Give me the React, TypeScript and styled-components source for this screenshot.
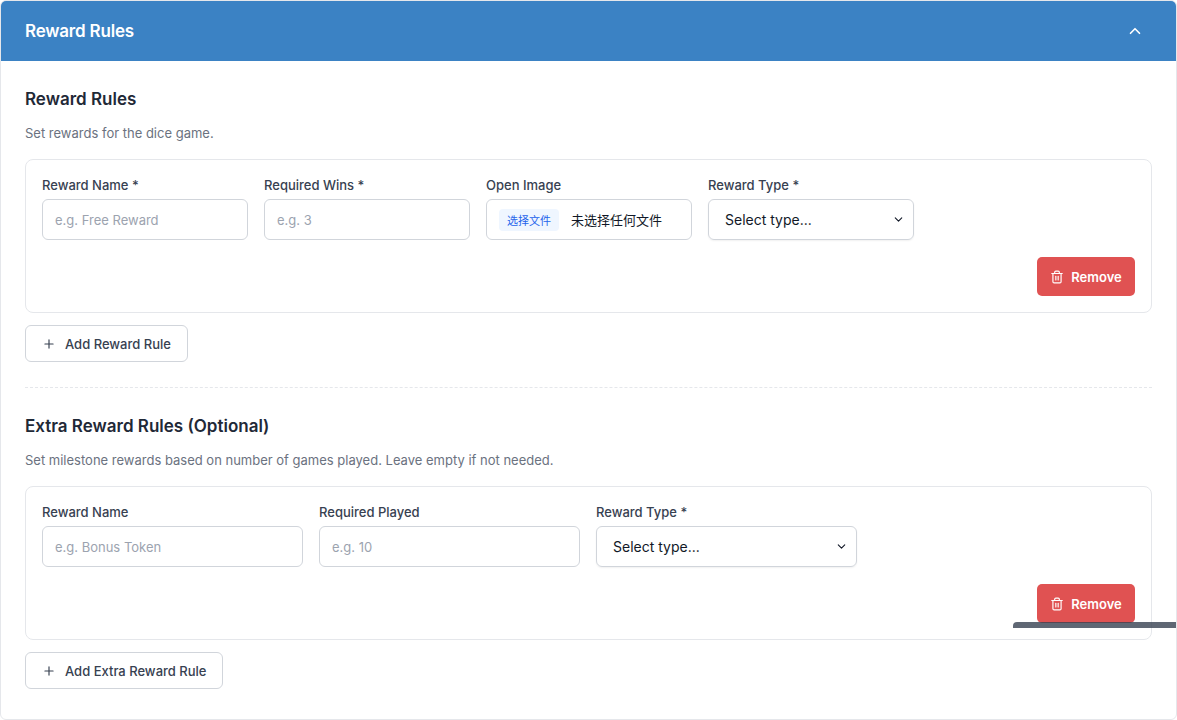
import styled, { createGlobalStyle } from "styled-components"
import { ChevronUp, ChevronDown, Plus, Trash2 } from "lucide-react"

const Global = createGlobalStyle`
    body {
        margin: 0;
        background: #fff;
        font-family: Inter, "Noto Sans", "Noto Sans CJK SC", sans-serif;
        color: #1f2937;
    }
`

type Field = { label: string; placeholder?: string; kind: "text" | "file" | "select" }

const rewardFields: Field[] = [
    { label: "Reward Name *", placeholder: "e.g. Free Reward", kind: "text" },
    { label: "Required Wins *", placeholder: "e.g. 3", kind: "text" },
    { label: "Open Image", kind: "file" },
    { label: "Reward Type *", kind: "select" },
]

const extraFields: Field[] = [
    { label: "Reward Name", placeholder: "e.g. Bonus Token", kind: "text" },
    { label: "Required Played", placeholder: "e.g. 10", kind: "text" },
    { label: "Reward Type *", kind: "select" },
]

function RuleCard({ fields, width }: { fields: Field[]; width: number }) {
    return (
        <Card>
            <FieldRow>
                {fields.map((f) => (
                    <FieldBox key={f.label} $width={width}>
                        <Label>{f.label}</Label>
                        {f.kind === "text" && <Input placeholder={f.placeholder} />}
                        {f.kind === "file" && (
                            <FileBox>
                                <FileButton>选择文件</FileButton>
                                <span>未选择任何文件</span>
                            </FileBox>
                        )}
                        {f.kind === "select" && (
                            <SelectBox>
                                <span>Select type...</span>
                                <ChevronDown size={13} strokeWidth={2} />
                            </SelectBox>
                        )}
                    </FieldBox>
                ))}
            </FieldRow>
            <ActionRow>
                <RemoveButton>
                    <Trash2 size={14} strokeWidth={2} />
                    Remove
                </RemoveButton>
            </ActionRow>
        </Card>
    )
}

export default function App() {
    return (
        <>
            <Global />
            <Panel>
                <Header>
                    <HeaderTitle>Reward Rules</HeaderTitle>
                    <ChevronUp size={18} strokeWidth={2.2} color="#fff" />
                </Header>
                <Body>
                    <Title>Reward Rules</Title>
                    <Desc>Set rewards for the dice game.</Desc>
                    <RuleCard fields={rewardFields} width={206} />
                    <AddButton>
                        <Plus size={14} strokeWidth={2} />
                        Add Reward Rule
                    </AddButton>
                    <Divider />
                    <Title>Extra Reward Rules (Optional)</Title>
                    <Desc>
                        Set milestone rewards based on number of games played. Leave
                        empty if not needed.
                    </Desc>
                    <RuleCard fields={extraFields} width={261} />
                    <AddButton>
                        <Plus size={14} strokeWidth={2} />
                        Add Extra Reward Rule
                    </AddButton>
                </Body>
                <Scrollbar />
            </Panel>
        </>
    )
}

const Panel = styled.div`
    position: relative;
    width: 1177px;
    height: 720px;
    box-sizing: border-box;
    border: 1px solid #e5e7eb;
    border-radius: 6px;
    overflow: hidden;
`

const Header = styled.div`
    height: 60px;
    background: #3b82c4;
    display: flex;
    align-items: center;
    justify-content: space-between;
    padding: 0 32px 0 24px;
`

const HeaderTitle = styled.div`
    color: #fff;
    font-size: 17px;
    font-weight: 600;
    letter-spacing: -0.2px;
`

const Body = styled.div`
    padding: 28px 24px 0 24px;
    display: flex;
    flex-direction: column;
`

const Title = styled.div`
    font-size: 17px;
    font-weight: 600;
    color: #1f2937;
    margin-bottom: 16px;
`

const Desc = styled.div`
    font-size: 13px;
    color: #6b7280;
    margin-bottom: 18px;
`

const Card = styled.div`
    border: 1px solid #e5e7eb;
    border-radius: 8px;
    padding: 17px 16px 16px 16px;
    display: flex;
    flex-direction: column;
`

const FieldRow = styled.div`
    display: flex;
    gap: 16px;
`

const FieldBox = styled.div<{ $width: number }>`
    width: ${(p) => p.$width}px;
    display: flex;
    flex-direction: column;
    gap: 6px;
`

const Label = styled.div`
    font-size: 13px;
    font-weight: 500;
    color: #374151;
`

const Input = styled.input`
    height: 41px;
    box-sizing: border-box;
    border: 1px solid #d1d5db;
    border-radius: 6px;
    padding: 0 12px;
    font-size: 13px;
    font-family: inherit;
    &::placeholder {
        color: #9ca3af;
    }
`

const FileBox = styled.div`
    height: 41px;
    box-sizing: border-box;
    border: 1px solid #d1d5db;
    border-radius: 6px;
    padding: 0 12px;
    display: flex;
    align-items: center;
    gap: 12px;
    font-size: 13px;
    color: #111827;
    white-space: nowrap;
`

const FileButton = styled.span`
    background: #eff6ff;
    color: #2563eb;
    font-size: 11px;
    padding: 3px 8px;
    border-radius: 4px;
`

const SelectBox = styled.div`
    height: 41px;
    box-sizing: border-box;
    border: 1px solid #d1d5db;
    border-radius: 6px;
    padding: 0 8px 0 16px;
    display: flex;
    align-items: center;
    justify-content: space-between;
    font-size: 14px;
    color: #111827;
    box-shadow: 0 1px 2px rgba(0, 0, 0, 0.06);
`

const ActionRow = styled.div`
    display: flex;
    justify-content: flex-end;
    margin-top: 17px;
`

const RemoveButton = styled.button`
    width: 98px;
    height: 39px;
    border: none;
    border-radius: 5px;
    background: #e05252;
    color: #fff;
    font-family: inherit;
    font-size: 13px;
    font-weight: 600;
    display: flex;
    align-items: center;
    justify-content: center;
    gap: 7px;
`

const AddButton = styled.button`
    align-self: flex-start;
    margin-top: 12px;
    height: 37px;
    padding: 0 16px;
    background: #fff;
    border: 1px solid #d1d5db;
    border-radius: 6px;
    font-family: inherit;
    font-size: 13px;
    font-weight: 500;
    color: #374151;
    display: flex;
    align-items: center;
    gap: 9px;
`

const Divider = styled.div`
    border-top: 1px dashed #e5e7eb;
    margin: 25px 0 28px;
`

const Scrollbar = styled.div`
    position: absolute;
    left: 1012px;
    top: 621px;
    width: 170px;
    height: 6px;
    border-radius: 4px 0 0 0;
    background: rgba(55, 65, 81, 0.8);
`
